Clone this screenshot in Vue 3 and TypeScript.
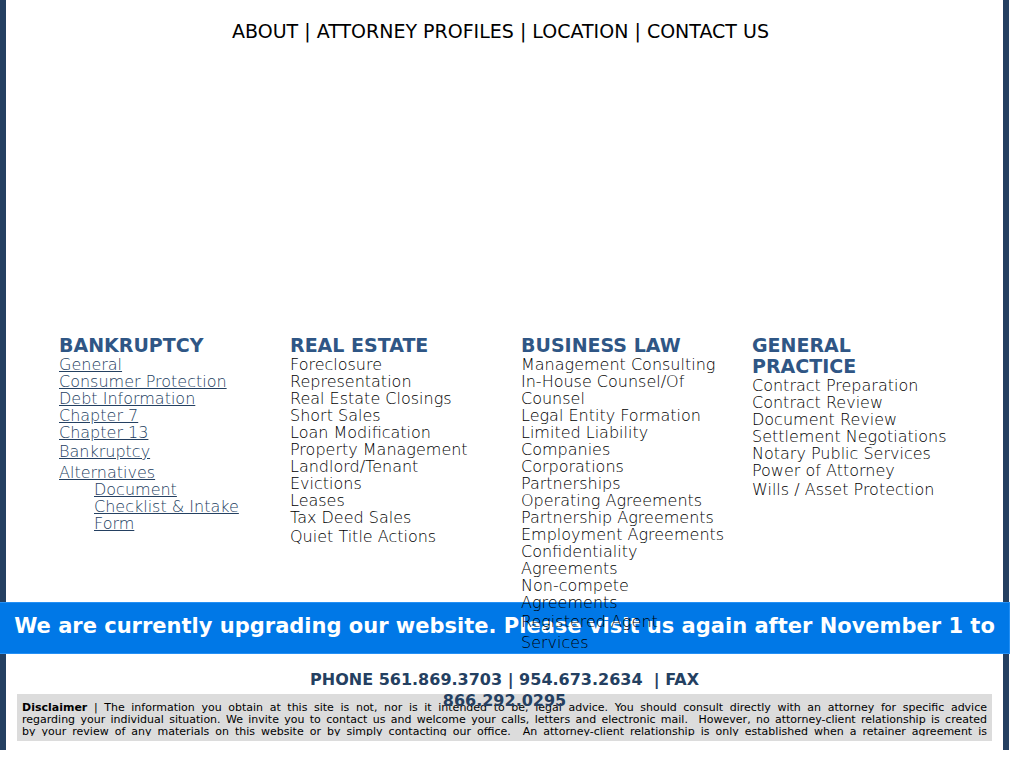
<script setup lang="ts">
interface Line { text: string; tall?: boolean; inset?: boolean }
interface Column { title: string[]; linked?: boolean; lines: Line[] }

const navigation: string[] = ['ABOUT', 'ATTORNEY PROFILES', 'LOCATION', 'CONTACT US']

const plain = (...texts: string[]): Line[] => texts.map((text) => ({ text }))

const columns: Column[] = [
  {
    title: ['BANKRUPTCY'],
    linked: true,
    lines: [
      ...plain('General', 'Consumer Protection', 'Debt Information', 'Chapter 7', 'Chapter 13'),
      { text: 'Bankruptcy', tall: true },
      { text: 'Alternatives', tall: true },
      { text: 'Document', inset: true },
      { text: 'Checklist & Intake', inset: true },
      { text: 'Form', inset: true },
    ],
  },
  {
    title: ['REAL ESTATE'],
    lines: [
      ...plain('Foreclosure', 'Representation', 'Real Estate Closings', 'Short Sales', 'Loan Modification',
        'Property Management', 'Landlord/Tenant', 'Evictions', 'Leases', 'Tax Deed Sales'),
      { text: 'Quiet Title Actions', tall: true },
    ],
  },
  {
    title: ['BUSINESS LAW'],
    lines: [
      ...plain('Management Consulting', 'In-House Counsel/Of', 'Counsel', 'Legal Entity Formation',
        'Limited Liability', 'Companies', 'Corporations', 'Partnerships', 'Operating Agreements',
        'Partnership Agreements', 'Employment Agreements', 'Confidentiality', 'Agreements',
        'Non-compete', 'Agreements'),
      { text: 'Registered Agent', tall: true },
      { text: 'Services', tall: true },
    ],
  },
  {
    title: ['GENERAL', 'PRACTICE'],
    lines: [
      ...plain('Contract Preparation', 'Contract Review', 'Document Review', 'Settlement Negotiations',
        'Notary Public Services', 'Power of Attorney'),
      { text: 'Wills / Asset Protection', tall: true },
    ],
  },
]
</script>

<template>
  <div class="page">
    <nav class="nav">
      <template v-for="(item, i) in navigation" :key="item">
        <span v-if="i > 0"> | </span><a href="#">{{ item }}</a>
      </template>
    </nav>

    <main class="columns">
      <section v-for="column in columns" :key="column.title[0]" class="column">
        <h2><span v-for="word in column.title" :key="word">{{ word }}</span></h2>
        <ul>
          <li
            v-for="(line, i) in column.lines"
            :key="i"
            :class="{ tall: line.tall, inset: line.inset }"
          >
            <a v-if="column.linked" href="#">{{ line.text }}</a>
            <template v-else>{{ line.text }}</template>
          </li>
        </ul>
      </section>
    </main>

    <div class="banner">We are currently upgrading our website. Please visit us again after November 1 to</div>

    <p class="phone">PHONE 561.869.3703 | 954.673.2634 &nbsp;| FAX<br>866.292.0295</p>

    <footer class="disclaimer">
      <p>
        <span class="row"><b>Disclaimer</b> | The information you obtain at this site is not, nor is it intended to be, legal advice. You should consult directly with an attorney for specific advice</span>
        <span class="row">regarding your individual situation. We invite you to contact us and welcome your calls, letters and electronic mail.&nbsp; However, no attorney-client relationship is created</span>
        <span class="row">by your review of any materials on this website or by simply contacting our office.&nbsp; An attorney-client relationship is only established when a retainer agreement is</span>
      </p>
    </footer>
  </div>
</template>

<style scoped>
.page {
  box-sizing: border-box;
  margin-right: 15px;
  padding-bottom: 9px;
  border: solid #244061;
  border-width: 0 6px;
  font-family: "DejaVu Sans", sans-serif;
  color: #000;
}

.nav {
  box-sizing: border-box;
  height: 335px;
  padding: 20px 8px 0 0;
  text-align: center;
  font-size: 19px;
  line-height: 22px;
}

.nav a {
  color: inherit;
  text-decoration: none;
}

.columns {
  position: relative;
  z-index: 1;
  display: grid;
  grid-template-columns: repeat(4, 1fr);
  gap: 33px;
  height: 267px;
  padding: 0 53px;
}

.column {
  min-width: 0;
  white-space: nowrap;
}

h2 {
  margin: 0;
  font-size: 19px;
  line-height: 21px;
  font-weight: 700;
  color: #2f5685;
}

h2 span {
  display: block;
}

ul {
  margin: 0;
  padding: 0;
  list-style: none;
  font-size: 16px;
  line-height: 17px;
  font-weight: 200;
}

.tall {
  line-height: 21px;
}

.inset {
  padding-left: 35px;
}

.tall + .inset {
  margin-top: -2px;
}

li a {
  color: #244061;
}

.banner {
  margin: 0 -7px 0 -6px;
  padding: 10px 0 14px;
  border: 1px solid #2490f5;
  border-left: 0;
  background: #0078e7;
  color: #fff;
  font-size: 21px;
  line-height: 26px;
  font-weight: 700;
  text-align: center;
  white-space: nowrap;
}

.phone {
  position: relative;
  height: 25px;
  margin: 15px 0 0;
  text-align: center;
  font-size: 16px;
  line-height: 21px;
  font-weight: 700;
  color: #244061;
}

.disclaimer {
  margin: 0 11px;
  padding: 8px 5px 5px;
  background: #dcdcdc;
  font-size: 11px;
  line-height: 12px;
}

.disclaimer p {
  height: 34px;
  margin: 0;
  overflow: hidden;
}

.row {
  display: block;
  text-align: justify;
  text-align-last: justify;
}
</style>
